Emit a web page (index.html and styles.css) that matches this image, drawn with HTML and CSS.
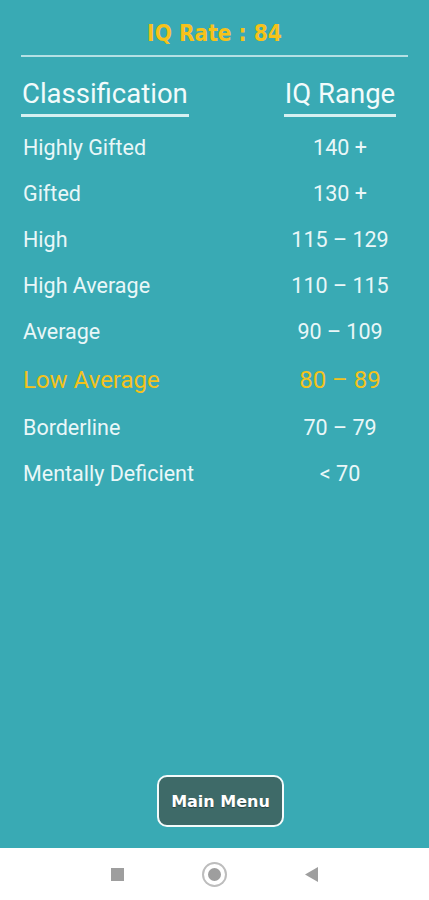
FILE: index.html
```html
<!DOCTYPE html>
<html lang="en">
<head>
    <meta charset="UTF-8">
    <meta name="viewport" content="width=device-width, initial-scale=1.0">
    <title>IQ Result</title>
    <link rel="stylesheet" href="styles.css">
</head>
<body>
    <div class="screen">
        <h1 class="rate">IQ Rate : 84</h1>
        <hr class="divider">

        <div class="table">
            <div class="head"><span>Classification</span></div>
            <div class="head range"><span>IQ Range</span></div>

            <div class="cell">Highly Gifted</div>
            <div class="cell range">140 +</div>

            <div class="cell">Gifted</div>
            <div class="cell range">130 +</div>

            <div class="cell">High</div>
            <div class="cell range">115 – 129</div>

            <div class="cell">High Average</div>
            <div class="cell range">110 – 115</div>

            <div class="cell">Average</div>
            <div class="cell range">90 – 109</div>

            <div class="cell current">Low Average</div>
            <div class="cell range current">80 – 89</div>

            <div class="cell">Borderline</div>
            <div class="cell range">70 – 79</div>

            <div class="cell">Mentally Deficient</div>
            <div class="cell range">&lt; 70</div>
        </div>

        <div class="footer">
            <button class="menu-btn">Main Menu</button>
        </div>
    </div>

    <nav class="navbar">
        <span class="nav-square"></span>
        <span class="nav-home"></span>
        <svg class="nav-back" width="14" height="15" viewBox="0 0 14 15"><polygon points="13,0 13,15 0,7.5" fill="#9e9e9e"/></svg>
    </nav>
</body>
</html>
```

FILE: styles.css
```css
/* IQ result screen */
body {
    margin: 0;
    width: 429px;
    height: 900px;
    display: flex;
    flex-direction: column;
    font-family: Roboto, "Noto Sans", sans-serif;
    background-color: #fff;
}
.screen {
    flex: 1;
    display: flex;
    flex-direction: column;
    background-color: #39aab4;
    padding: 0 21px;
}
.rate {
    margin: 20px 0 0;
    text-align: center;
    font-family: "DejaVu Sans Condensed", sans-serif;
    font-weight: bold;
    font-size: 22.5px;
    line-height: 26px;
    color: #f6c21a;
}
.divider {
    margin: 9px 0 0;
    border: none;
    height: 2px;
    background-color: #b4e0e4;
}
.table {
    display: grid;
    grid-template-columns: 1fr 136px;
}
.head {
    padding-top: 22px;
    font-size: 27.5px;
    line-height: 30px;
    color: #f2fbfb;
}
.head span {
    display: inline-block;
    padding: 0 1px 5px 1px;
    border-bottom: 3px solid #d6f0f1;
}
.head.range {
    text-align: center;
    margin-bottom: 8px;
}
.cell {
    font-size: 21.5px;
    line-height: 46px;
    color: #e9f7f8;
    padding-left: 2px;
}
.range {
    text-align: center;
    padding-left: 0;
}
.current {
    font-size: 24px;
    line-height: 50px;
    color: #f4c21b;
}
.footer {
    margin-top: auto;
    display: flex;
    justify-content: center;
    padding: 0 0 21px 12px;
}
.menu-btn {
    width: 127px;
    height: 52px;
    background-color: #3e6a68;
    border: 2px solid #f4fbfb;
    border-radius: 10px;
    color: #fff;
    font-family: "DejaVu Sans", sans-serif;
    font-weight: bold;
    font-size: 16px;
    text-shadow: 0 1px 1px rgba(0, 0, 0, 0.4);
    cursor: pointer;
}
.navbar {
    height: 52px;
    display: flex;
    align-items: center;
    justify-content: center;
    gap: 80px;
    background-color: #fff;
}
.nav-square {
    width: 13px;
    height: 13px;
    background-color: #9e9e9e;
}
.nav-home {
    width: 13px;
    height: 13px;
    border-radius: 50%;
    background-color: #9e9e9e;
    border: 4px solid #fff;
    box-shadow: 0 0 0 2px #bdbdbd;
}
```
